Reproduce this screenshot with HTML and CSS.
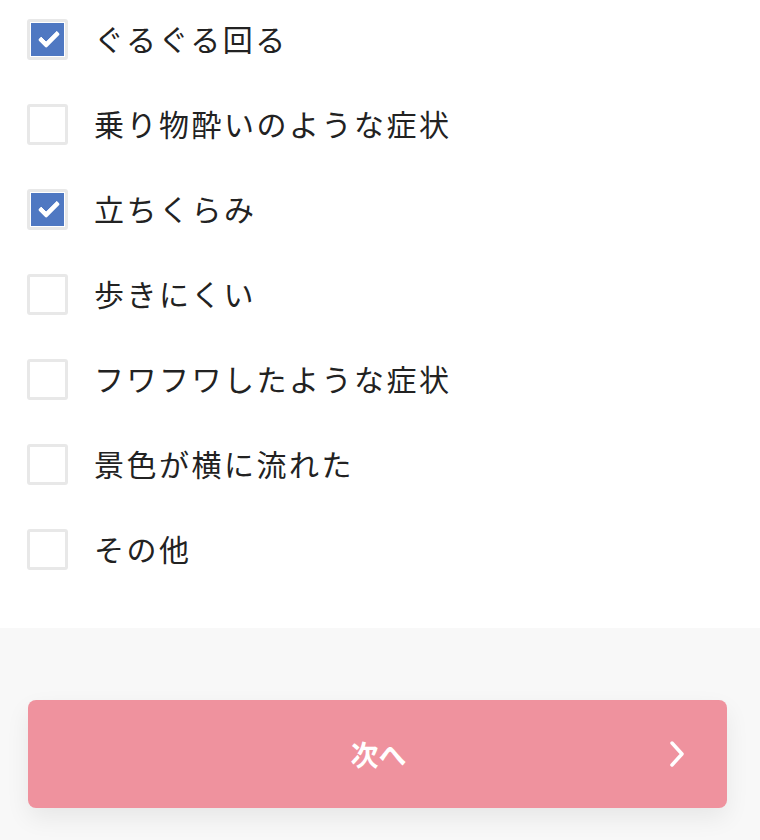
FILE: index.html
```html
<!DOCTYPE html>
<html lang="ja">
<head>
    <meta charset="UTF-8">
    <meta name="viewport" content="width=device-width, initial-scale=1.0">
    <title>症状の選択</title>
    <link rel="stylesheet" href="styles.css">
</head>
<body>
    <div class="symptom-list">
        <label class="symptom">
            <input type="checkbox" checked>
            <span class="box"></span>
            <span class="symptom-text">ぐるぐる回る</span>
        </label>
        <label class="symptom">
            <input type="checkbox">
            <span class="box"></span>
            <span class="symptom-text">乗り物酔いのような症状</span>
        </label>
        <label class="symptom">
            <input type="checkbox" checked>
            <span class="box"></span>
            <span class="symptom-text">立ちくらみ</span>
        </label>
        <label class="symptom">
            <input type="checkbox">
            <span class="box"></span>
            <span class="symptom-text">歩きにくい</span>
        </label>
        <label class="symptom">
            <input type="checkbox">
            <span class="box"></span>
            <span class="symptom-text">フワフワしたような症状</span>
        </label>
        <label class="symptom">
            <input type="checkbox">
            <span class="box"></span>
            <span class="symptom-text">景色が横に流れた</span>
        </label>
        <label class="symptom">
            <input type="checkbox">
            <span class="box"></span>
            <span class="symptom-text">その他</span>
        </label>
    </div>

    <div class="footer">
        <button class="next-button">
            <span>次へ</span>
            <svg class="chevron" width="20" height="28" viewBox="0 0 20 28">
                <path d="M4 3 L14 14 L4 25" fill="none" stroke="#fff" stroke-width="3.5" stroke-linecap="round" stroke-linejoin="round"/>
            </svg>
        </button>
    </div>
</body>
</html>
```

FILE: styles.css
```css
body {
    margin: 0;
    background: #f8f8f8;
    font-family: "Noto Sans CJK JP", "Noto Sans", sans-serif;
    color: #222;
}
.symptom-list {
    background: #fff;
    padding: 19px 28px 58px 27px;
    display: flex;
    flex-direction: column;
    gap: 44px;
}
.symptom {
    display: flex;
    align-items: center;
    height: 41px;
    cursor: pointer;
}
.symptom input {
    display: none;
}
.box {
    box-sizing: border-box;
    width: 41px;
    height: 41px;
    border: 3px solid #e8e8e8;
    border-radius: 3px;
    background: #fff;
    flex-shrink: 0;
    position: relative;
}
.symptom input:checked + .box {
    background: #4f78c2;
    box-shadow: inset 0 0 0 1px #fff;
}
.symptom input:checked + .box::after {
    content: "";
    position: absolute;
    left: 9px;
    top: 9px;
    width: 15px;
    height: 7px;
    border-left: 5px solid #fff;
    border-bottom: 5px solid #fff;
    transform: rotate(-45deg);
    border-radius: 2px;
}
.symptom-text {
    margin-left: 26px;
    font-size: 30px;
    letter-spacing: 2.5px;
    line-height: 1;
    margin-top: -3px;
}
.footer {
    padding: 72px 33px 40px 28px;
}
.next-button {
    width: 100%;
    height: 108px;
    border: none;
    border-radius: 8px;
    background: #ef929e;
    color: #fff;
    font-family: inherit;
    font-size: 28px;
    font-weight: bold;
    position: relative;
    box-shadow: 0 10px 24px rgba(0, 0, 0, 0.07);
}
.next-button span {
    margin-left: 2px;
}
.chevron {
    position: absolute;
    right: 39px;
    top: 40px;
}
```
